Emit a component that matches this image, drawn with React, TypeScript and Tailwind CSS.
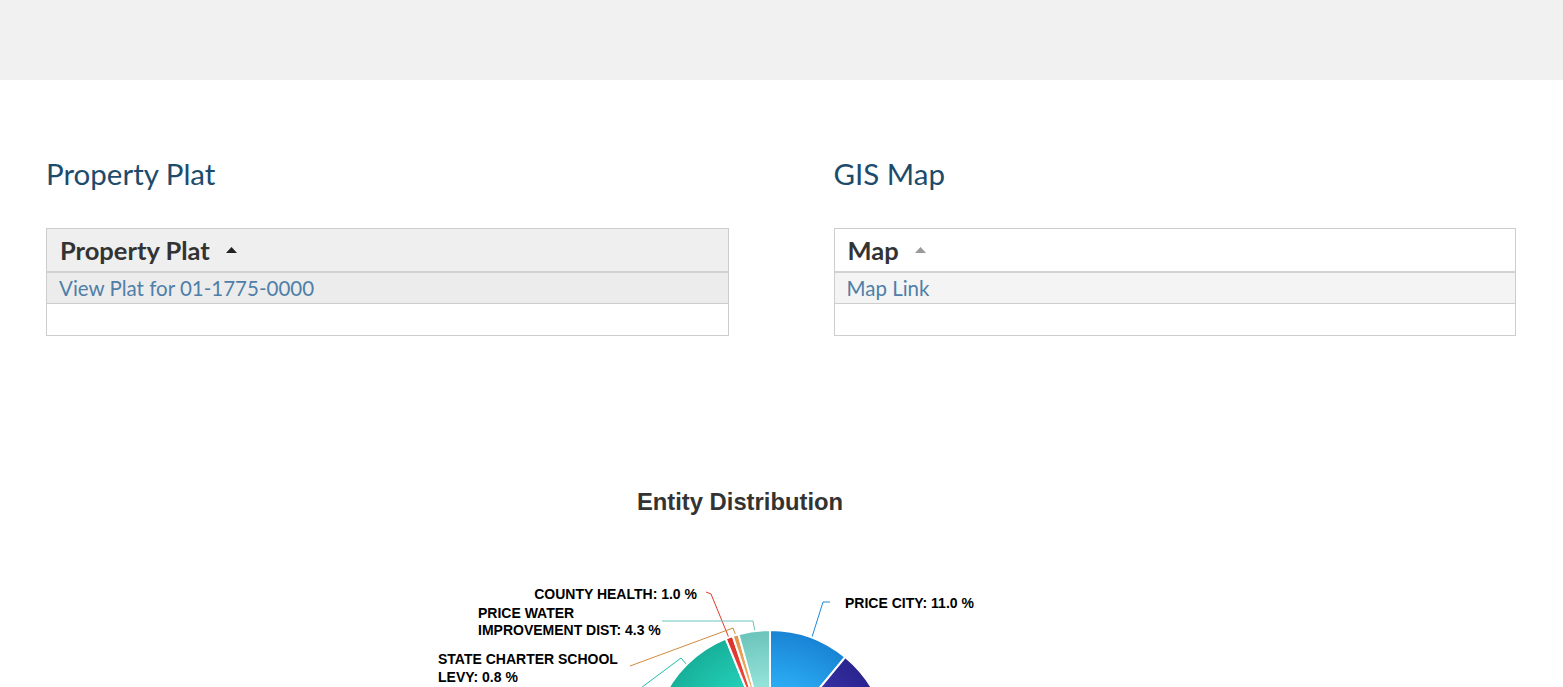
import React from "react";

const CX = 770;
const CY = 287;
const R = 118;

type Slice = { from: number; to: number; inner: string; outer: string; id: string };

const slices: Slice[] = [
  { id: "city", from: 0, to: 39.6, inner: "#2aaaf2", outer: "#1983d4" },
  { id: "indigo", from: 39.6, to: 120, inner: "#3b35ad", outer: "#29248e" },
  { id: "school", from: 120, to: 220, inner: "#f4b740", outer: "#e59a1d" },
  { id: "county", from: 220, to: 292, inner: "#8e5cc4", outer: "#6d3ea8" },
  { id: "green", from: 292, to: 338, inner: "#24d0b8", outer: "#17b09a" },
  { id: "health", from: 338, to: 341.6, inner: "#ef4a3c", outer: "#d9322a" },
  { id: "charter", from: 341.6, to: 344.5, inner: "#f2b066", outer: "#e0954a" },
  { id: "water", from: 344.5, to: 360, inner: "#92e2d8", outer: "#6bc3ba" },
];

function pt(deg: number, r = R) {
  const a = (deg * Math.PI) / 180;
  return [CX + r * Math.sin(a), CY - r * Math.cos(a)];
}

function arcPath(s: Slice) {
  const [x1, y1] = pt(s.from);
  const [x2, y2] = pt(s.to);
  const large = s.to - s.from > 180 ? 1 : 0;
  return `M ${CX} ${CY} L ${x1} ${y1} A ${R} ${R} 0 ${large} 1 ${x2} ${y2} Z`;
}

// chart coordinates are page y minus 460
const lbl = "font-['Liberation_Sans',Arial,sans-serif] text-[14px] font-bold";

function PieChart() {
  return (
    <svg width="1563" height="300" viewBox="0 0 1563 300" className="block">
      <defs>
        {slices.map((s) => (
          <radialGradient key={s.id} id={`g-${s.id}`} gradientUnits="userSpaceOnUse" cx={CX} cy={CY} r={R}>
            <stop offset="0" stopColor={s.inner} />
            <stop offset="0.55" stopColor={s.inner} />
            <stop offset="1" stopColor={s.outer} />
          </radialGradient>
        ))}
      </defs>
      <text
        x="740"
        y="49"
        textAnchor="middle"
        className="font-['Liberation_Sans',Arial,sans-serif] text-[23.8px] font-bold"
        fill="#333333"
      >
        Entity Distribution
      </text>

      {/* connectors */}
      <path d="M 830 141 L 823 141 L 812 176" fill="none" stroke="#1e88d8" strokeWidth="1" />
      <path d="M 706 131 L 711 133 L 729 177" fill="none" stroke="#e03a2e" strokeWidth="1" />
      <path d="M 630 205 L 733 167 L 736 175" fill="none" stroke="#d08a3c" strokeWidth="1" />
      <path d="M 662 160 L 753 160 L 755 171" fill="none" stroke="#6cc4bb" strokeWidth="1" />
      <path d="M 687 204 L 681 197 L 610 250" fill="none" stroke="#1fbfa8" strokeWidth="1" />

      {slices.map((s) => (
        <path
          key={s.id}
          d={arcPath(s)}
          fill={`url(#g-${s.id})`}
          stroke="#ffffff"
          strokeWidth="2"
          strokeLinejoin="round"
        />
      ))}

      <g fill="#000000">
        <text x="845" y="147" className={lbl}>PRICE CITY: 11.0 %</text>
        <text x="697" y="138" textAnchor="end" className={lbl}>COUNTY HEALTH: 1.0 %</text>
        <text x="478" y="157" className={lbl}>PRICE WATER</text>
        <text x="478" y="174" className={lbl}>IMPROVEMENT DIST: 4.3 %</text>
        <text x="438" y="203" className={lbl}>STATE CHARTER SCHOOL</text>
        <text x="438" y="221" className={lbl}>LEVY: 0.8 %</text>
      </g>
    </svg>
  );
}

function SortUp({ color }: { color: string }) {
  return (
    <svg width="11" height="6" viewBox="0 0 11 6" className="ml-[16px]">
      <path d="M0 6 L5.5 0 L11 6 Z" fill={color} />
    </svg>
  );
}

function LinkTable({
  title,
  header,
  link,
  headBg,
  rowBg,
  arrow,
}: {
  title: string;
  header: string;
  link: string;
  headBg: string;
  rowBg: string;
  arrow: string;
}) {
  return (
    <div>
      <h2 className="text-[29.5px] leading-[34px] text-[#1d4b6b]">{title}</h2>
      <div className="mt-[37px] border border-[#cdcdcd]">
        <div className={`flex h-[44px] items-center border-b-2 border-[#d2d2d2] px-[13px] ${headBg}`}>
          <span className="text-[25.5px] font-bold text-[#333333]">{header}</span>
          <SortUp color={arrow} />
        </div>
        <div className={`flex h-[31px] items-center border-b border-[#cdcdcd] px-[12px] ${rowBg}`}>
          <a className="text-[20.5px] text-[#4f7fa8]">{link}</a>
        </div>
        <div className="h-[31px] bg-white" />
      </div>
    </div>
  );
}

export default function App() {
  return (
    <div className="min-h-screen bg-white font-['Lato',sans-serif]">
      <div className="h-[80px] bg-[#f1f1f1]" />
      <div className="grid grid-cols-2 gap-[105px] pl-[46px] pr-[47px] pt-[77px]">
        <LinkTable
          title="Property Plat"
          header="Property Plat"
          link="View Plat for 01-1775-0000"
          headBg="bg-[#efefef]"
          rowBg="bg-[#ececec]"
          arrow="#222222"
        />
        <LinkTable
          title="GIS Map"
          header="Map"
          link="Map Link"
          headBg="bg-white"
          rowBg="bg-[#f4f4f4]"
          arrow="#999999"
        />
      </div>
      <div className="mt-[125px]">
        <PieChart />
      </div>
    </div>
  );
}
